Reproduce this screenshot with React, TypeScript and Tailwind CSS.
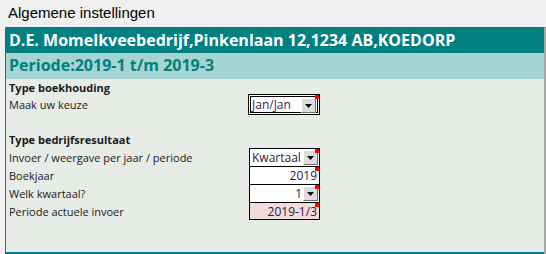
import React from "react";

function DropButton() {
  return (
    <div className="absolute right-[1px] top-[1px] flex h-[15px] w-[15px] items-center justify-center border border-t-white border-l-white border-r-[#6e6e6e] border-b-[#6e6e6e] bg-[#dcdcdc]">
      <svg width="7" height="4" viewBox="0 0 7 4">
        <path d="M0 0H7L3.5 4Z" fill="#000" />
      </svg>
    </div>
  );
}

function RedMark() {
  return <div className="absolute right-0 top-0 h-[4px] w-[4px] bg-[#ff0000]" />;
}

const ROWS = [
  { label: "Invoer / weergave per jaar / periode", value: "Kwartaal", align: "left", drop: true, pink: false },
  { label: "Boekjaar", value: "2019", align: "right", drop: false, pink: false },
  { label: "Welk kwartaal?", value: "1", align: "right", drop: true, pink: false },
  { label: "Periode actuele invoer", value: "2019-1/3", align: "right", drop: false, pink: true },
];

export default function App() {
  return (
    <div className="h-[254px] w-[546px] overflow-hidden bg-[#f0f0f0]">
      <div className="h-[27px] pl-[8px] pt-[3px] font-['Liberation_Sans',Arial,sans-serif] text-[15px] leading-[20px] text-black">
        Algemene instellingen
      </div>
      <div className="ml-[5px] flex h-[227px] w-[541px] flex-col border-l border-t border-[#5a5a5a] border-r-2 border-r-[#a8a8a8] font-['Open_Sans',sans-serif]">
        <div className="h-[25px] bg-[#008080] pl-[3px] text-[16px] font-bold leading-[24px] text-white">
          D.E. Momelkveebedrijf,Pinkenlaan 12,1234 AB,KOEDORP
        </div>
        <div className="h-[26px] bg-[#a6d4d2] pl-[3px] text-[16px] font-bold leading-[25px] text-[#008080]">
          Periode:2019-1 t/m 2019-3
        </div>
        <div className="flex-1 border-b-2 border-[#008080] bg-[#e8ece6] pl-[3px] text-[11px] leading-[17px] text-[#1a1a1a]">
          <div className="h-[17px] font-bold">Type boekhouding</div>
          <div className="flex h-[17px] items-center">
            <div className="w-[239px]">Maak uw keuze</div>
            <div className="relative h-[21px] w-[72px] border border-black bg-white p-[1px]">
              <div className="relative h-full w-full border border-black bg-white pl-[1px] text-[12px] leading-[15px] text-[#3a1a5a]">
                Jan/Jan
                <DropButton />
              </div>
              <RedMark />
            </div>
          </div>
          <div className="h-[17px]" />
          <div className="h-[18px] pt-[1px] font-bold">Type bedrijfsresultaat</div>
          <div className="flex flex-col">
            {ROWS.map((row, i) => (
              <div key={row.label} className="flex h-[18px]">
                <div className="w-[240px] pt-[1px]">{row.label}</div>
                <div
                  className={
                    "relative w-[71px] border-x border-t border-black text-[12px] leading-[17px] text-[#2a1a40] " +
                    (i === ROWS.length - 1 ? "border-b " : "") +
                    (row.pink ? "bg-[#f2dcdb] " : "bg-white ") +
                    (row.align === "right" ? "text-right " : "text-left ") +
                    (row.drop && row.align === "right" ? "pr-[17px]" : "px-[2px]")
                  }
                >
                  {row.value}
                  {row.drop && <DropButton />}
                  <RedMark />
                </div>
              </div>
            ))}
          </div>
        </div>
      </div>
    </div>
  );
}
